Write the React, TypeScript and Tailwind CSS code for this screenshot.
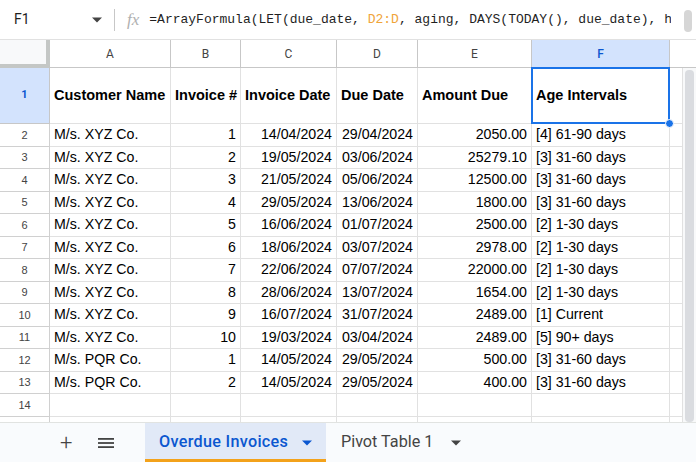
import React from 'react';

const rows: [string, string, string, string, string, string][] = [
  ['M/s. XYZ Co.', '1', '14/04/2024', '29/04/2024', '2050.00', '[4] 61-90 days'],
  ['M/s. XYZ Co.', '2', '19/05/2024', '03/06/2024', '25279.10', '[3] 31-60 days'],
  ['M/s. XYZ Co.', '3', '21/05/2024', '05/06/2024', '12500.00', '[3] 31-60 days'],
  ['M/s. XYZ Co.', '4', '29/05/2024', '13/06/2024', '1800.00', '[3] 31-60 days'],
  ['M/s. XYZ Co.', '5', '16/06/2024', '01/07/2024', '2500.00', '[2] 1-30 days'],
  ['M/s. XYZ Co.', '6', '18/06/2024', '03/07/2024', '2978.00', '[2] 1-30 days'],
  ['M/s. XYZ Co.', '7', '22/06/2024', '07/07/2024', '22000.00', '[2] 1-30 days'],
  ['M/s. XYZ Co.', '8', '28/06/2024', '13/07/2024', '1654.00', '[2] 1-30 days'],
  ['M/s. XYZ Co.', '9', '16/07/2024', '31/07/2024', '2489.00', '[1] Current'],
  ['M/s. XYZ Co.', '10', '19/03/2024', '03/04/2024', '2489.00', '[5] 90+ days'],
  ['M/s. PQR Co.', '1', '14/05/2024', '29/05/2024', '500.00', '[3] 31-60 days'],
  ['M/s. PQR Co.', '2', '14/05/2024', '29/05/2024', '400.00', '[3] 31-60 days'],
];

const headers = ['Customer Name', 'Invoice #', 'Invoice Date', 'Due Date', 'Amount Due', 'Age Intervals'];
const letters = ['A', 'B', 'C', 'D', 'E', 'F'];
// which columns are right aligned in data rows
const rightAlign = [false, true, true, true, true, false];

const cell = 'border-r border-b border-[#e1e1e1] overflow-hidden whitespace-nowrap';
const rowHead = 'border-r border-b border-[#d0d0d0] flex items-center justify-center text-[11px] text-[#444]';

const Caret = ({ color }: { color: string }) => (
  <svg width="10" height="6" viewBox="0 0 10 5">
    <path d="M0 0 L10 0 L5 5 Z" fill={color} />
  </svg>
);

const DataRow = ({ n, r }: { n?: number; r?: string[] }) => (
  <>
    <div className={`${rowHead} h-[22.5px]`}>{n ?? ''}</div>
    {letters.map((_, i) => (
      <div
        key={i}
        className={`${cell} h-[22.5px] flex items-center px-[4px] text-[14.2px] text-black ${rightAlign[i] ? 'justify-end' : ''}`}
      >
        {r ? r[i] : ''}
      </div>
    ))}
    <div className={`${cell} h-[22.5px]`} />
  </>
);

export default function App() {
  return (
    <div className="w-[696px] h-[462px] overflow-hidden bg-white flex flex-col" style={{ fontFamily: 'Roboto, sans-serif' }}>
      {/* formula bar */}
      <div className="h-[40px] shrink-0 flex items-center border-b border-[#e1e1e1] relative">
        <div className="w-[92px] pl-[14px] text-[14px] text-[#1f1f1f]">F1</div>
        <Caret color="#444" />
        <div className="ml-[12px] w-px h-[22px] bg-[#c7c7c7]" />
        <span className="ml-[12px] text-[17px] italic text-[#b0b0b0]" style={{ fontFamily: '"Liberation Serif", serif' }}>fx</span>
        <div
          className="ml-[10px] text-[13px] text-[#1f1f1f] whitespace-nowrap overflow-hidden w-[522px]"
          style={{ fontFamily: '"Liberation Mono", monospace' }}
        >
          =ArrayFormula(LET(due_date, <span className="text-[#f0a43a]">D2:D</span>, aging, DAYS(TODAY(), due_date), he
        </div>
        <div className="absolute right-[4px] top-[10px] w-[8px] h-[22px] rounded-full bg-[#d6d6d6]" />
      </div>

      {/* grid */}
      <div className="flex flex-1 min-h-0 overflow-hidden">
        <div className="grid grid-cols-[50px_121px_70px_96px_81px_114px_138px_13px] content-start" style={{ fontFamily: '"Liberation Sans", Arial, sans-serif' }}>
          {/* column headers */}
          <div className="h-[28px] bg-[#f8f9fa] border-r-4 border-b-4 border-[#c4c7c5]" />
          {letters.map((l) => (
            <div
              key={l}
              className={`h-[28px] border-r border-b border-[#c7c7c7] flex items-center justify-center text-[12px] ${
                l === 'F' ? 'bg-[#d3e3fd] text-[#0b57d0] font-medium' : 'bg-white text-[#444]'
              }`}
              style={{ fontFamily: 'Roboto, sans-serif' }}
            >
              {l}
            </div>
          ))}
          <div className="h-[28px] border-b border-[#c7c7c7] bg-white" />

          {/* row 1 */}
          <div className="h-[56px] bg-[#d3e3fd] border-r border-b border-[#c7c7c7] flex items-center justify-center text-[11px] font-bold text-[#0b57d0]" style={{ fontFamily: 'Roboto, sans-serif' }}>
            1
          </div>
          {headers.map((h, i) => (
            <div key={h} className={`${cell} h-[56px] flex items-center px-[4px] text-[14.5px] font-bold text-black relative overflow-visible`}>
              {h}
              {i === 5 && (
                <>
                  <div className="absolute -left-px -top-px -right-px -bottom-px border-2 border-[#1a73e8]" />
                  <div className="absolute -right-[5px] -bottom-[5px] w-[9px] h-[9px] rounded-full bg-[#1a73e8] border border-white z-10" />
                </>
              )}
            </div>
          ))}
          <div className={`${cell} h-[56px]`} />

          {rows.map((r, i) => (
            <DataRow key={i} n={i + 2} r={r} />
          ))}
          <DataRow n={14} />
          <DataRow />
        </div>

        {/* vertical scrollbar */}
        <div className="w-[13px] flex flex-col">
          <div className="h-[28px] shrink-0 border-b border-[#c7c7c7] bg-white" />
          <div className="flex-1 bg-[#f8f9fa] px-[2px] pt-[2px]">
            <div className="h-[352px] rounded-[4px] bg-[#dadce0]" />
          </div>
        </div>
      </div>

      {/* sheet tabs */}
      <div className="h-[40px] shrink-0 bg-[#f9fbfd] border-t border-[#e1e3e1] flex items-stretch">
        <div className="w-[145px] flex items-center">
          <span className="ml-[60px] text-[22px] text-[#444] font-light leading-none">+</span>
          <svg className="ml-[25px]" width="18" height="14" viewBox="0 0 18 14">
            <rect x="1" y="2" width="16" height="1.8" fill="#444" />
            <rect x="1" y="6.1" width="16" height="1.8" fill="#444" />
            <rect x="1" y="10.2" width="16" height="1.8" fill="#444" />
          </svg>
        </div>
        <div className="w-[181px] bg-[#e1e9f7] border-b-[3px] border-[#f3a21b] flex items-center pl-[14px] pt-[3px] gap-[14px]">
          <span className="text-[16.2px] font-medium text-[#0b57d0] tracking-[0.3px]">Overdue Invoices</span>
          <Caret color="#0b57d0" />
        </div>
        <div className="flex items-center pl-[15px] gap-[18px]">
          <span className="text-[16.2px] text-[#444]">Pivot Table 1</span>
          <Caret color="#444" />
        </div>
      </div>
    </div>
  );
}
